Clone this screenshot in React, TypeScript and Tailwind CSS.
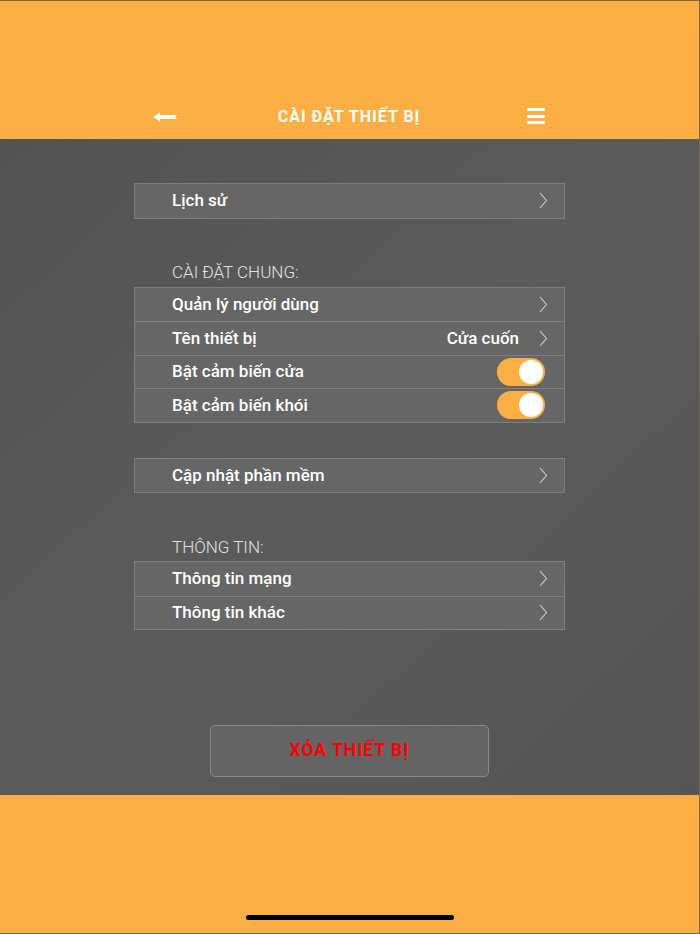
import React from "react";

const Chevron = () => (
  <svg width="10" height="17" viewBox="0 0 10 17" className="shrink-0">
    <path d="M2 1 L8.5 8.5 L2 16" fill="none" stroke="#cfcfcf" strokeWidth="1.1" />
  </svg>
);

const Toggle = () => (
  <div className="w-[48px] h-[28px] rounded-full bg-[#fbae43] relative shrink-0">
    <div className="absolute right-[2px] top-[2px] w-[24px] h-[24px] rounded-full bg-white" />
  </div>
);

type RowProps = { label: string; value?: string; toggle?: boolean; divider?: boolean };

const Row = ({ label, value, toggle, divider }: RowProps) => (
  <div
    className={`flex items-center h-[33.5px] pl-[37px] ${toggle ? "pr-[19px]" : "pr-[16px]"} ${
      divider ? "border-t border-[#7e7e7e]" : ""
    }`}
  >
    <span className="text-white text-[17px] font-medium flex-1 leading-none">{label}</span>
    {value && <span className="text-white text-[17px] font-medium mr-[19px] leading-none">{value}</span>}
    {toggle ? <Toggle /> : <Chevron />}
  </div>
);

const Group = ({ children }: { children: React.ReactNode }) => (
  <div className="border border-[#7e7e7e] bg-[#666666]">{children}</div>
);

const SectionLabel = ({ text }: { text: string }) => (
  <div className="h-[20px] flex items-center pl-[38px] text-[#e2e2e2] text-[17px] font-light leading-none">
    {text}
  </div>
);

export default function App() {
  return (
    <div
      className="w-[700px] h-[934px] flex flex-col border-t border-r border-b border-[#7d6a48] overflow-hidden"
      style={{ fontFamily: "Roboto, 'Noto Sans', sans-serif" }}
    >
      {/* Header */}
      <div className="h-[138px] bg-[#fbae43] flex items-end pb-[12px] shrink-0">
        <div className="w-full h-[20px] grid grid-cols-[1fr_auto_1fr] items-center pl-[153px] pr-[154px]">
          <div className="flex">
            <svg width="25" height="10" viewBox="0 0 25 10">
              <path d="M0 5 L7 0.5 L7 3 L24 3 L22 5 L24 7 L7 7 L7 9.5 Z" fill="#ffffff" />
            </svg>
          </div>
          <span className="text-white text-[16px] font-bold tracking-[1px] leading-none">CÀI ĐẶT THIẾT BỊ</span>
          <div className="flex justify-end">
            <div className="w-[18px] flex flex-col gap-[3.5px] -mt-[2px]">
              <div className="h-[3px] bg-white rounded-[1px]" />
              <div className="h-[3px] bg-white rounded-[1px]" />
              <div className="h-[3px] bg-white rounded-[1px]" />
            </div>
          </div>
        </div>
      </div>

      {/* Body */}
      <div className="flex-1 bg-gradient-to-br from-[#535353] via-[#5b5b5b] to-[#555555] px-[134px] pt-[44px] pb-[18px] flex flex-col">
        <Group>
          <Row label="Lịch sử" />
        </Group>

        <div className="h-[44px]" />
        <SectionLabel text="CÀI ĐẶT CHUNG:" />
        <div className="h-[4px]" />
        <Group>
          <Row label="Quản lý người dùng" />
          <Row label="Tên thiết bị" value="Cửa cuốn" divider />
          <Row label="Bật cảm biến cửa" toggle divider />
          <Row label="Bật cảm biến khói" toggle divider />
        </Group>

        <div className="h-[35px]" />
        <Group>
          <Row label="Cập nhật phần mềm" />
        </Group>

        <div className="h-[44px]" />
        <SectionLabel text="THÔNG TIN:" />
        <div className="h-[4px]" />
        <Group>
          <Row label="Thông tin mạng" />
          <Row label="Thông tin khác" divider />
        </Group>

        <div className="mt-auto mx-[76px] h-[52px] rounded-[5px] border border-[#8a8a8a] bg-[#646464] flex items-center justify-center">
          <span className="text-[#ff0000] text-[17.5px] font-bold tracking-[1px] leading-none">XÓA THIẾT BỊ</span>
        </div>
      </div>

      {/* Footer */}
      <div className="h-[138px] bg-[#fbae43] shrink-0 flex flex-col items-center">
        <div className="h-[120px]" />
        <div className="w-[208px] h-[5px] rounded-full bg-black" />
      </div>
    </div>
  );
}
